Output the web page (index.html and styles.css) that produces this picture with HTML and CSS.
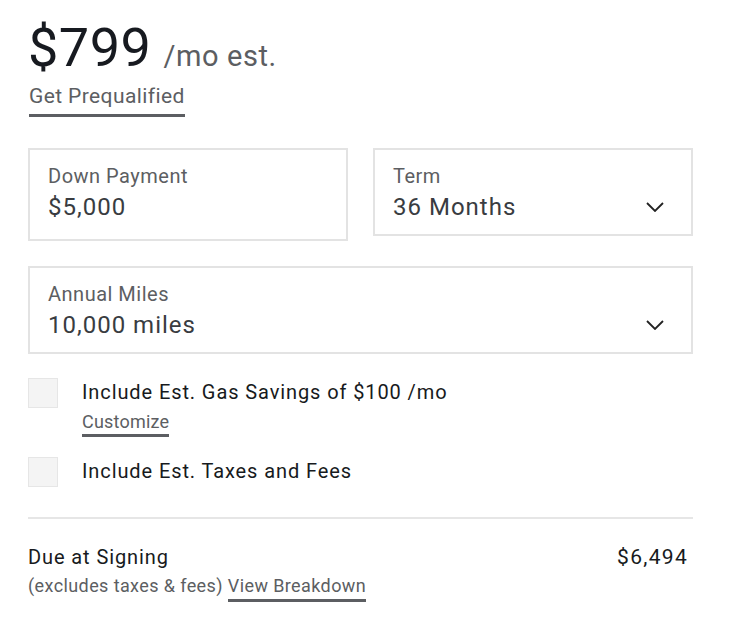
FILE: index.html
```html
<!DOCTYPE html>
<html>
<head>
<meta charset="utf-8">
<link rel="stylesheet" href="styles.css">
</head>
<body>
<div class="panel">
  <div class="price">
    <span class="amount">$799</span>
    <span class="per">/mo est.</span>
  </div>
  <a class="link prequal" href="#">Get Prequalified</a>

  <div class="fields">
    <div class="field tall">
      <div class="label">Down Payment</div>
      <div class="value">$5,000</div>
    </div>
    <div class="field select">
      <div class="texts">
        <div class="label">Term</div>
        <div class="value">36 Months</div>
      </div>
      <svg class="chev" width="18" height="10" viewBox="0 0 18 10"><path d="M1 1 L9 9 L17 1" fill="none" stroke="#222" stroke-width="1.8"/></svg>
    </div>
    <div class="field select wide">
      <div class="texts">
        <div class="label">Annual Miles</div>
        <div class="value">10,000 miles</div>
      </div>
      <svg class="chev" width="18" height="10" viewBox="0 0 18 10"><path d="M1 1 L9 9 L17 1" fill="none" stroke="#222" stroke-width="1.8"/></svg>
    </div>
  </div>

  <div class="checks">
    <div class="check">
      <span class="box"></span>
      <div class="check-text">
        <div class="check-label">Include Est. Gas Savings of $100 /mo</div>
        <a class="link small" href="#">Customize</a>
      </div>
    </div>
    <div class="check">
      <span class="box"></span>
      <div class="check-text">
        <div class="check-label">Include Est. Taxes and Fees</div>
      </div>
    </div>
  </div>

  <div class="due">
    <div class="due-row">
      <span class="due-label">Due at Signing</span>
      <span class="due-value">$6,494</span>
    </div>
    <div class="due-note">(excludes taxes &amp; fees) <a class="link note" href="#">View Breakdown</a></div>
  </div>
</div>
</body>
</html>
```

FILE: styles.css
```css
* { box-sizing: border-box; }
html, body { margin: 0; padding: 0; background: #fff; }
body {
  font-family: Roboto, "Liberation Sans", sans-serif;
  color: #171a20;
}
.panel {
  width: 665px;
  margin-left: 28px;
  padding-top: 18px;
}
.price {
  display: flex;
  align-items: baseline;
  gap: 12px;
  height: 66px;
}
.amount {
  font-size: 54px;
  line-height: 60px;
  letter-spacing: 0.5px;
  color: #171a20;
}
.per {
  font-size: 29px;
  letter-spacing: 0.6px;
  color: #5c5e62;
}
.link {
  color: #5c5e62;
  text-decoration: none;
  display: inline-block;
  border-bottom: 3px solid #5c5e62;
}
.prequal {
  font-size: 21px;
  line-height: 24px;
  letter-spacing: 0.4px;
  padding-bottom: 6px;
  margin-left: 1px;
}
.fields {
  display: grid;
  grid-template-columns: 320px 320px;
  column-gap: 25px;
  row-gap: 25px;
  margin-top: 31px;
  align-items: start;
}
.field {
  border: 2px solid #e3e3e3;
  padding: 14px 18px 0 18px;
  height: 88px;
}
.field.tall { height: 93px; }
.field.wide { grid-column: 1 / 3; }
.select {
  display: flex;
  justify-content: space-between;
  align-items: flex-start;
}
.chev { margin-top: 38px; margin-right: 9px; }
.label {
  font-size: 20px;
  line-height: 24px;
  letter-spacing: 0.5px;
  color: #5c5e62;
}
.value {
  font-size: 24px;
  line-height: 30px;
  margin-top: 4px;
  color: #393c41;
  letter-spacing: 1px;
}
.checks {
  margin-top: 24px;
  display: flex;
  flex-direction: column;
  gap: 20px;
}
.check {
  display: flex;
  gap: 24px;
  align-items: flex-start;
}
.box {
  width: 30px;
  height: 30px;
  background: #f4f4f4;
  border: 1px solid #e6e6e6;
  flex: none;
}
.check-label {
  font-size: 20px;
  line-height: 26px;
  padding-top: 1px;
  letter-spacing: 0.9px;
}
.small {
  font-size: 18px;
  line-height: 22px;
  letter-spacing: 0.2px;
  padding-bottom: 1px;
  margin-top: 6px;
}
.due {
  margin-top: 30px;
  border-top: 2px solid #e6e6e6;
  padding-top: 25px;
}
.due-row {
  display: flex;
  justify-content: space-between;
  font-size: 20px;
  line-height: 26px;
  letter-spacing: 0.9px;
  padding-right: 5px;
}
.due-value {
  font-size: 21px;
  letter-spacing: 1.3px;
}
.due-note {
  font-size: 18px;
  line-height: 22px;
  letter-spacing: 0.4px;
  margin-top: 5px;
  color: #5c5e62;
}
.note {
  padding-bottom: 2px;
}
```
